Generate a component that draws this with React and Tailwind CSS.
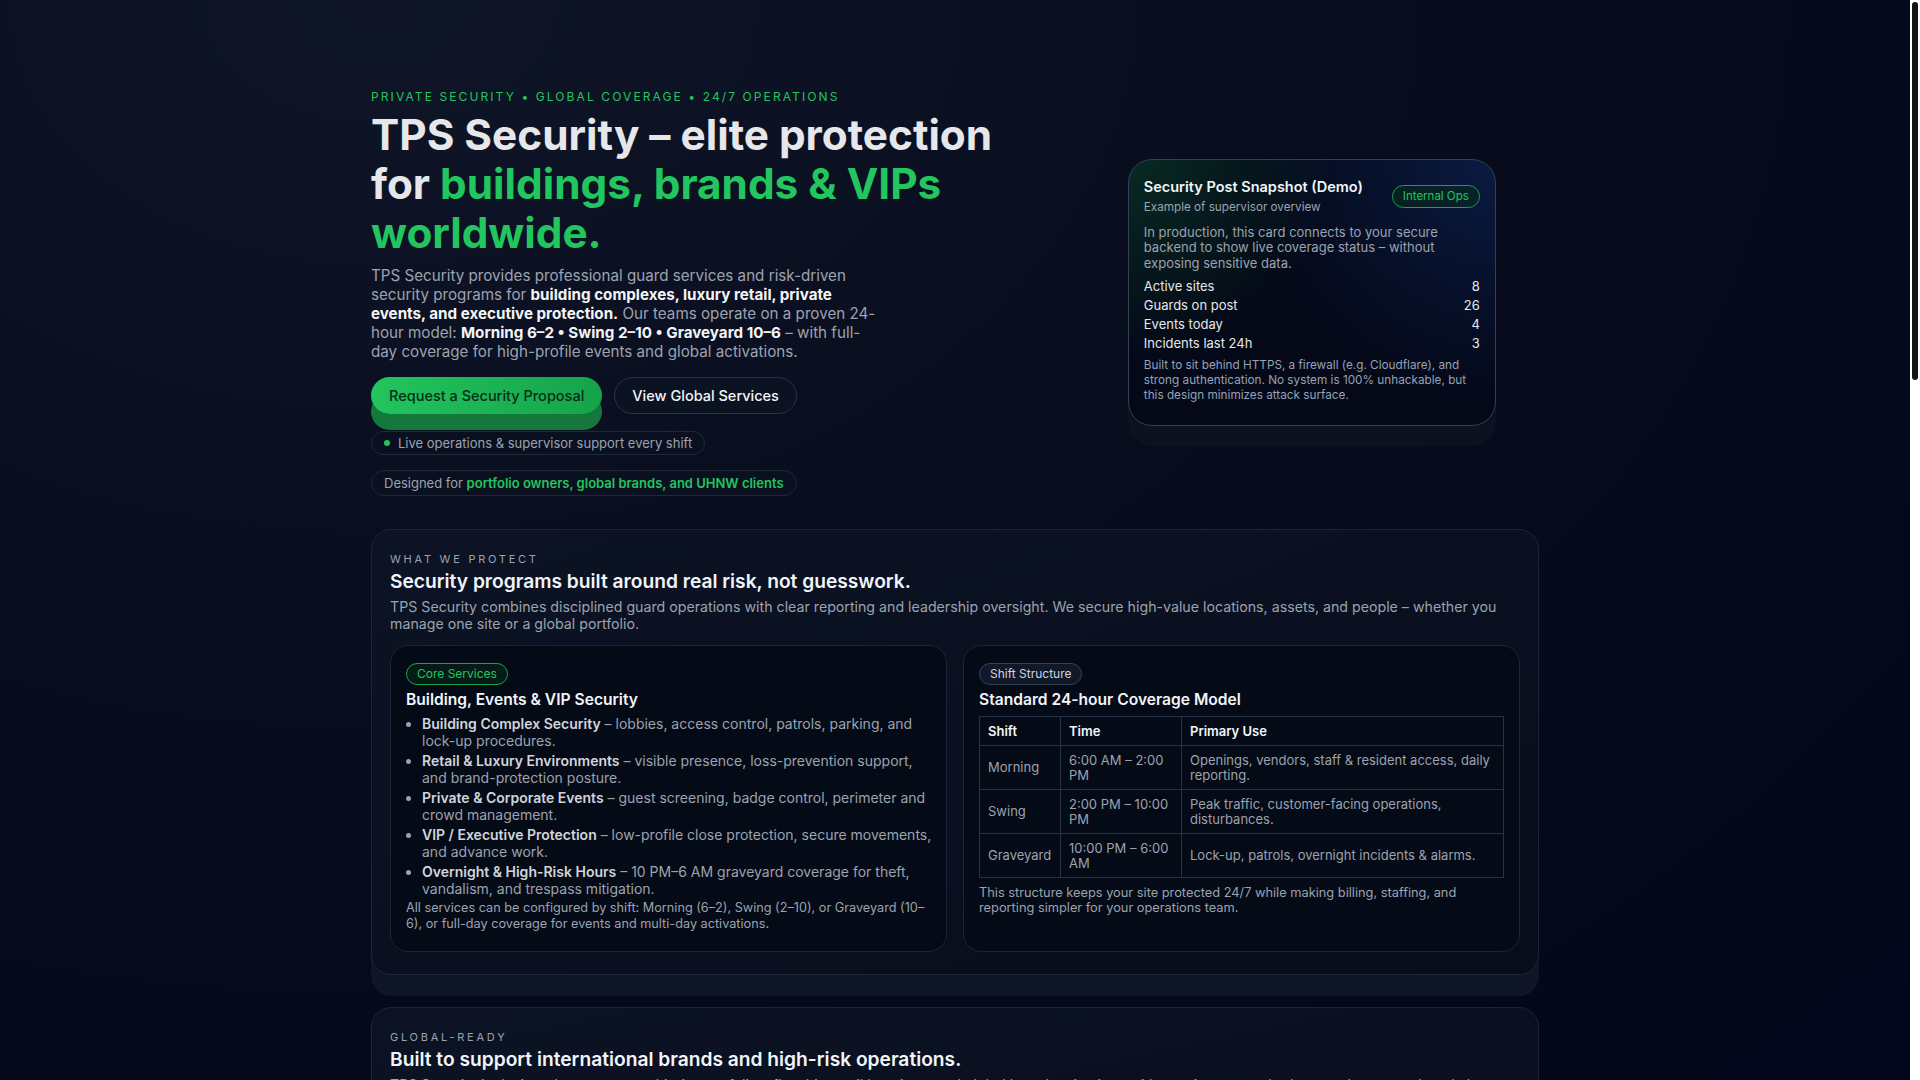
import React from 'react';

const stats = [
  ['Active sites', '8'],
  ['Guards on post', '26'],
  ['Events today', '4'],
  ['Incidents last 24h', '3'],
];

const services = [
  ['Building Complex Security', 'lobbies, access control, patrols, parking, and lock-up procedures.'],
  ['Retail & Luxury Environments', 'visible presence, loss-prevention support, and brand-protection posture.'],
  ['Private & Corporate Events', 'guest screening, badge control, perimeter and crowd management.'],
  ['VIP / Executive Protection', 'low-profile close protection, secure movements, and advance work.'],
  ['Overnight & High-Risk Hours', '10 PM–6 AM graveyard coverage for theft, vandalism, and trespass mitigation.'],
];

const shifts = [
  ['Morning', '6:00 AM – 2:00 PM', 'Openings, vendors, staff & resident access, daily reporting.'],
  ['Swing', '2:00 PM – 10:00 PM', 'Peak traffic, customer-facing operations, disturbances.'],
  ['Graveyard', '10:00 PM – 6:00 AM', 'Lock-up, patrols, overnight incidents & alarms.'],
];

const SnapshotCard = () => (
  <div className="justify-self-center w-[368px] rounded-[24px] border border-[#334155] bg-[#040817] bg-[radial-gradient(circle_at_0%_0%,rgba(22,163,74,0.22),transparent_45%),radial-gradient(circle_at_100%_0%,rgba(37,99,235,0.2),transparent_55%)] px-[15px] pt-[17px] pb-[22px] shadow-[0_20px_0_0_#0d1220]">
    <div className="flex items-center justify-between">
      <div>
        <h3 className="text-[14.5px] leading-5 font-semibold text-[#f1f5f9]">Security Post Snapshot (Demo)</h3>
        <p className="mt-[2px] text-[11.7px] leading-4 text-[#9ca3af]">Example of supervisor overview</p>
      </div>
      <span className="rounded-full border border-[#16a34a] bg-[#052e16]/50 px-2.5 py-[2.5px] text-[11.5px] leading-4 text-[#22c55e]">Internal Ops</span>
    </div>
    <p className="mt-[10px] text-[13px] leading-[15.3px] text-[#9ca3af]">
      In production, this card connects to your secure backend to show live coverage status – without exposing sensitive data.
    </p>
    <div className="mt-[6px]">
      {stats.map(([label, value]) => (
        <div key={label} className="flex justify-between text-[13px] leading-[19px] text-[#e5e7eb]">
          <span>{label}</span>
          <span>{value}</span>
        </div>
      ))}
    </div>
    <p className="mt-[5px] text-[11.75px] leading-[15px] text-[#94a3b8]">
      Built to sit behind HTTPS, a firewall (e.g. Cloudflare), and strong authentication. No system is 100% unhackable, but this design minimizes attack surface.
    </p>
  </div>
);

const Hero = () => (
  <div className="grid grid-cols-[1.5fr_1fr] items-center gap-8">
    <div>
      <p className="text-[12px] leading-4 tracking-[0.175em] text-[#22c55e]">PRIVATE SECURITY • GLOBAL COVERAGE • 24/7 OPERATIONS</p>
      <h1 className="mt-[5px] max-w-[650px] text-[42.3px] leading-[49px] font-bold text-[#e5e7eb]">
        TPS Security – elite protection for <span className="text-[#22c55e]">buildings, brands &amp; VIPs worldwide.</span>
      </h1>
      <p className="mt-[9px] max-w-[514px] text-[15.2px] leading-[19px] text-[#9ca3af]">
        TPS Security provides professional guard services and risk-driven security programs for{' '}
        <strong className="font-bold text-[#f3f4f6]">building complexes, luxury retail, private events, and executive protection.</strong>{' '}
        Our teams operate on a proven 24-hour model:{' '}
        <strong className="font-bold text-[#f3f4f6]">Morning 6–2 • Swing 2–10 • Graveyard 10–6</strong> – with full-day coverage for high-profile events and global activations.
      </p>
      <div className="mt-4 flex gap-3">
        <button className="rounded-full bg-gradient-to-r from-[#22c55e] to-[#16a34a] px-[18px] py-[8.5px] text-[14.5px] leading-5 font-medium text-[#052e16] shadow-[0_16px_0_0_#15773b]">
          Request a Security Proposal
        </button>
        <button className="rounded-full border border-[#273449] bg-[#0b1222] px-[17px] py-[7.5px] text-[14.5px] leading-5 font-medium text-[#f3f4f6]">
          View Global Services
        </button>
      </div>
      <div className="mt-[17px] flex w-fit items-center gap-2 rounded-full border border-[#1f2937] bg-[#0a1020] px-3 py-[3px] text-[13px] leading-4 text-[#9ca3af]">
        <span className="h-1.5 w-1.5 rounded-full bg-[#22c55e]" />
        Live operations &amp; supervisor support every shift
      </div>
      <div className="mt-[15px] flex w-fit items-center rounded-full border border-[#1f2937] bg-[#0a1020] px-3 py-1 text-[13px] leading-4 text-[#9ca3af]">
        Designed for&nbsp;<span className="font-semibold text-[#22c55e]">portfolio owners, global brands, and UHNW clients</span>
      </div>
    </div>
    <SnapshotCard />
  </div>
);

const Section = ({ eyebrow, title, children, className = '' }) => (
  <section className={`rounded-[20px] border border-[#1c2537] bg-[#0a1020] bg-gradient-to-br from-[#0c1324] to-[#080d1b] px-[18px] pt-[21px] pb-[22px] shadow-[0_21px_0_0_#0f1627] ${className}`}>
    <p className="text-[11px] leading-4 tracking-[0.25em] text-[#9ca3af]">{eyebrow}</p>
    <h2 className="mt-[2px] text-[19.2px] leading-6 font-semibold text-[#f1f5f9]">{title}</h2>
    {children}
  </section>
);

const ServicesCard = () => (
  <div className="rounded-[18px] border border-[#1c2537] bg-[#050a17] px-[15px] pt-[14px] pb-[18.5px]">
    <span className="inline-block rounded-full border border-[#16a34a] bg-[#052e16]/50 px-2.5 py-[2px] text-[12px] leading-4 text-[#22c55e]">Core Services</span>
    <h3 className="mt-[4px] text-[15.6px] leading-[22px] font-semibold text-[#f1f5f9]">Building, Events &amp; VIP Security</h3>
    <ul className="mt-1 -mr-[4px] list-disc space-y-[3px] pl-4 text-[14px] leading-[17px] text-[#9ca3af] marker:text-[#9ca3af]">
      {services.map(([name, desc]) => (
        <li key={name}>
          <span className="font-semibold text-[#d1d5db]">{name}</span> – {desc}
        </li>
      ))}
    </ul>
    <p className="mt-[3px] text-[12.7px] leading-4 text-[#9ca3af]">
      All services can be configured by shift: Morning (6–2), Swing (2–10), or Graveyard (10–6), or full-day coverage for events and multi-day activations.
    </p>
  </div>
);

const ShiftCard = () => (
  <div className="rounded-[18px] border border-[#1c2537] bg-[#050a17] px-[15px] pt-[14px] pb-[18.5px]">
    <span className="inline-block rounded-full border border-[#334155] bg-[#111827] px-2.5 py-[2px] text-[12px] leading-4 text-[#cbd5e1]">Shift Structure</span>
    <h3 className="mt-[4px] text-[15.6px] leading-[22px] font-semibold text-[#f1f5f9]">Standard 24-hour Coverage Model</h3>
    <table className="mt-[5px] w-full border-collapse text-left text-[13px] leading-[15px]">
      <thead>
        <tr className="text-[#f1f5f9]">
          <th className="w-[81px] border border-[#263247] px-2 py-[6.5px] font-semibold">Shift</th>
          <th className="w-[121px] border border-[#263247] px-2 py-[6.5px] font-semibold">Time</th>
          <th className="border border-[#263247] px-2 py-[6.5px] font-semibold">Primary Use</th>
        </tr>
      </thead>
      <tbody className="text-[#9ca3af]">
        {shifts.map(([shift, time, use]) => (
          <tr key={shift}>
            <td className="border border-[#263247] px-2 py-[6.5px]">{shift}</td>
            <td className="border border-[#263247] px-2 py-[6.5px]">{time}</td>
            <td className="border border-[#263247] px-2 py-[6.5px]">{use}</td>
          </tr>
        ))}
      </tbody>
    </table>
    <p className="mt-[7px] text-[12.8px] leading-[15px] text-[#9ca3af]">
      This structure keeps your site protected 24/7 while making billing, staffing, and reporting simpler for your operations team.
    </p>
  </div>
);

export default function App() {
  return (
    <div className="flex h-screen overflow-hidden bg-[#03061a] font-['Inter',sans-serif]">
      <div className="min-w-0 flex-1 overflow-hidden bg-[radial-gradient(ellipse_at_20%_0%,#0f1628_0%,#080c1d_45%,#03061a_100%)]">
        <main className="mx-auto w-[1168px] pt-[89px] pb-24">
          <Hero />

          <Section className="mt-[33px]" eyebrow="WHAT WE PROTECT" title="Security programs built around real risk, not guesswork.">
            <p className="mt-[5px] text-[14.2px] leading-[17px] text-[#9ca3af]">
              TPS Security combines disciplined guard operations with clear reporting and leadership oversight. We secure high-value locations, assets, and people – whether you manage one site or a global portfolio.
            </p>
            <div className="mt-[13px] grid grid-cols-2 gap-4">
              <ServicesCard />
              <ShiftCard />
            </div>
          </Section>

          <Section className="mt-[32px]" eyebrow="GLOBAL-READY" title="Built to support international brands and high-risk operations.">
            <p className="mt-[5px] text-[14.2px] leading-[17px] text-[#9ca3af]">
              TPS Security is designed to support multi-site portfolios, flagship retail locations, and global brand activations with consistent standards, vetted personnel, and clear escalation paths in every region we operate.
            </p>
            <div className="mt-[14px] grid grid-cols-3 gap-4">
              {['Multi-site portfolios', 'Global brand activations', 'Executive travel support'].map((t) => (
                <div key={t} className="rounded-[18px] border border-[#1c2537] bg-[#050a17] p-4">
                  <h3 className="text-[15.6px] leading-[22px] font-semibold text-[#f1f5f9]">{t}</h3>
                  <p className="mt-1 text-[13px] leading-[17px] text-[#9ca3af]">
                    Consistent post orders, supervisor check-ins, and incident reporting across every location and time zone.
                  </p>
                </div>
              ))}
            </div>
          </Section>
        </main>
      </div>
      {/* page scrollbar */}
      <div className="w-[10px] shrink-0 bg-white p-[2px]">
        <div className="h-[378px] rounded-full bg-[#151515]" />
      </div>
    </div>
  );
}
